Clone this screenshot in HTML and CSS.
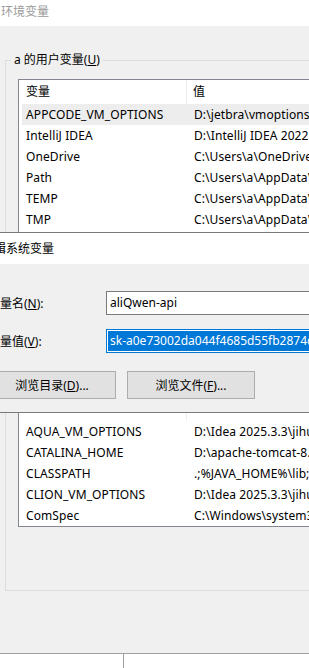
FILE: index.html
```html
<!DOCTYPE html>
<html lang="zh-CN">
<head>
  <meta charset="UTF-8">
  <title>环境变量</title>
  <link rel="stylesheet" href="styles.css">
</head>
<body>

  <div class="window">
    <div class="titlebar">环境变量</div>
    <div class="client">

      <section class="group group-user">
        <span class="group-title">a 的用户变量(<u>U</u>)</span>
        <div class="listview lv-user">
          <div class="lv-row lv-head"><span>变量</span><span>值</span></div>
          <div class="lv-row selected"><span>APPCODE_VM_OPTIONS</span><span>D:\jetbra\vmoptions\appcode.vmoptions</span></div>
          <div class="lv-row"><span>IntelliJ IDEA</span><span>D:\IntelliJ IDEA 2022.3\bin;</span></div>
          <div class="lv-row"><span>OneDrive</span><span>C:\Users\a\OneDrive</span></div>
          <div class="lv-row"><span>Path</span><span>C:\Users\a\AppData\Local\Microsoft\WindowsApps;</span></div>
          <div class="lv-row"><span>TEMP</span><span>C:\Users\a\AppData\Local\Temp</span></div>
          <div class="lv-row"><span>TMP</span><span>C:\Users\a\AppData\Local\Temp</span></div>
        </div>
      </section>

      <section class="group group-system">
        <span class="group-title">系统变量(<u>S</u>)</span>
        <div class="listview lv-system">
          <div class="lv-row lv-head"><span>变量</span><span>值</span></div>
          <div class="lv-row"><span>AQUA_VM_OPTIONS</span><span>D:\Idea 2025.3.3\jihuo\vmoptions</span></div>
          <div class="lv-row"><span>CATALINA_HOME</span><span>D:\apache-tomcat-8.5</span></div>
          <div class="lv-row"><span>CLASSPATH</span><span>.;%JAVA_HOME%\lib;%JAVA_HOME%\lib\tools.jar</span></div>
          <div class="lv-row"><span>CLION_VM_OPTIONS</span><span>D:\Idea 2025.3.3\jihuo\vmoptions</span></div>
          <div class="lv-row"><span>ComSpec</span><span>C:\Windows\system32\cmd.exe</span></div>
        </div>
      </section>

    </div>
  </div>

  <div class="behind">
    <div class="behind-pane"></div>
  </div>

  <!-- edit dialog sits on top of the main window -->
  <div class="dialog">
    <div class="dlg-title">编辑系统变量</div>
    <div class="dlg-body">
      <div class="field field-name">
        <label>变量名(<u>N</u>):</label>
        <div class="edit">aliQwen-api</div>
      </div>
      <div class="field field-value">
        <label>变量值(<u>V</u>):</label>
        <div class="edit focused"><span class="sel">sk-a0e73002da044f4685d55fb2874c</span></div>
      </div>
      <div class="dlg-buttons">
        <button>浏览目录(<u>D</u>)...</button>
        <button>浏览文件(<u>F</u>)...</button>
      </div>
    </div>
  </div>

</body>
</html>
```

FILE: styles.css
```css
html, body {
  overflow: hidden;
}

body {
  margin: 0;
  padding: 0;
  position: relative;
  width: 309px;
  height: 668px;
  background-color: #fff;
  font-family: "Noto Sans", "Noto Sans CJK SC", sans-serif;
  font-size: 12px;
  color: #000;
}

u {
  text-decoration: underline;
  text-underline-offset: 1px;
}

.window {
  height: 653px;
  background-color: #f0f0f0;
  overflow: hidden;
}

.titlebar {
  height: 26px;
  line-height: 23px;
  padding-left: 1px;
  background-color: #fff;
  color: #9b9b9b;
}

.group {
  position: relative;
  box-sizing: border-box;
  width: 440px;
  margin-left: 5px;
  padding: 18px 0 0 12px;
  border: 1px solid #dcdcdc;
}

.group-title {
  position: absolute;
  top: -9px;
  left: 5px;
  padding: 0 3px;
  line-height: 16px;
  background-color: #f0f0f0;
}

.group-user {
  margin-top: 34px;
  height: 301px;
}

.group-system {
  margin-top: 16px;
  height: 214px;
}

.listview {
  width: 400px;
  border: 1px solid #828790;
  background-color: #fff;
  overflow: hidden;
}

.lv-user {
  height: 230px;
}

.lv-system {
  height: 129px;
}

.lv-row {
  display: grid;
  grid-template-columns: 165px 1fr;
  height: 21px;
  line-height: 21px;
  margin-left: 3px;
  white-space: nowrap;
  letter-spacing: 0.1px;
}

.lv-row span {
  padding-left: 4px;
  overflow: hidden;
}

.lv-row span + span {
  padding-left: 7px;
}

.lv-head {
  height: 24px;
  line-height: 24px;
}

.lv-system .lv-head {
  line-height: 18px;
}

.lv-head span:first-child {
  border-right: 1px solid #ececec;
}

.lv-head span + span {
  padding-left: 6px;
}

.selected {
  background-color: #ededed;
}

.behind {
  height: 15px;
  border-top: 1px solid #a0a0a0;
  background-color: #fff;
}

.behind-pane {
  width: 123px;
  height: 100%;
  border-right: 1px solid #a0a0a0;
}

/* edit dialog */
.dialog {
  position: absolute;
  top: 232px;
  left: -30px;
  box-sizing: border-box;
  width: 520px;
  height: 181px;
  border: 1px solid #7a7a7a;
  background-color: #f0f0f0;
}

.dlg-title {
  height: 31px;
  line-height: 31px;
  padding-left: 11px;
  background-color: #fff;
}

.dlg-body {
  padding: 27px 0 13px 17px;
}

.field {
  display: grid;
  grid-template-columns: 118px 1fr;
  align-items: center;
}

.field-name {
  margin-bottom: 14px;
}

.field-value {
  margin-bottom: 18px;
}

.edit {
  box-sizing: border-box;
  height: 24px;
  line-height: 22px;
  padding: 0 3px;
  border: 1px solid #7a7a7a;
  background-color: #fff;
  white-space: nowrap;
  overflow: hidden;
}

.edit.focused {
  padding: 1px;
  border-color: #0078d7;
}

.sel {
  display: block;
  line-height: 20px;
  padding-left: 2px;
  background-color: #0078d7;
  color: #fff;
}

.dlg-buttons {
  display: flex;
  gap: 11px;
}

.dlg-buttons button {
  width: 128px;
  height: 28px;
  padding: 0;
  border: 1px solid #adadad;
  background-color: #e1e1e1;
  font-family: inherit;
  font-size: 12px;
  color: #000;
}
```
